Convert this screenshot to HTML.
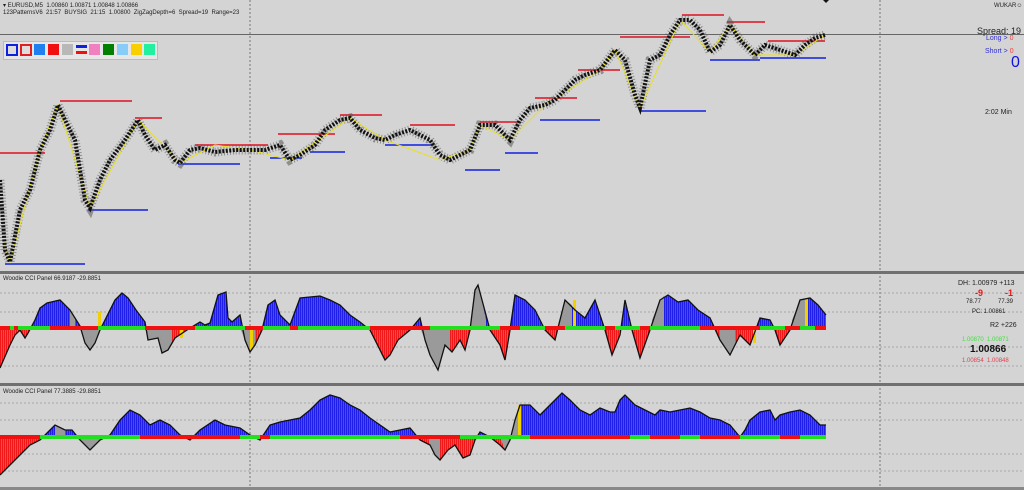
<!DOCTYPE html>
<html><head><meta charset="utf-8"><style>
html,body{margin:0;padding:0;background:#d4d4d4;}
body{width:1024px;height:490px;overflow:hidden;position:relative;font-family:"Liberation Sans",sans-serif;}
.t{position:absolute;font-size:6px;color:#222;white-space:nowrap;}
</style></head><body>
<svg width="1024" height="490" style="position:absolute;left:0;top:0">
<defs>
<clipPath id="a1"><rect x="0" y="272" width="880" height="56"/></clipPath>
<clipPath id="b1"><rect x="0" y="328" width="880" height="56"/></clipPath>
<clipPath id="a2"><rect x="0" y="384" width="880" height="53"/></clipPath>
<clipPath id="b2"><rect x="0" y="437" width="880" height="53"/></clipPath>
<pattern id="pb" width="2" height="10" patternUnits="userSpaceOnUse"><rect width="2" height="10" fill="#1e1ee8"/><rect x="1" width="0.6" height="10" fill="#6a6af0"/></pattern>
<pattern id="pr" width="2" height="10" patternUnits="userSpaceOnUse"><rect width="2" height="10" fill="#f01818"/><rect x="1" width="0.6" height="10" fill="#f07070"/></pattern>
</defs>
<line x1="250" y1="0" x2="250" y2="490" stroke="#777" stroke-dasharray="2,2"/>
<line x1="880" y1="0" x2="880" y2="490" stroke="#777" stroke-dasharray="2,2"/>
<line x1="0" y1="34.5" x2="1024" y2="34.5" stroke="#666" stroke-width="1"/>
<rect x="0" y="271" width="1024" height="3" fill="#707070"/>
<rect x="0" y="383" width="1024" height="3" fill="#707070"/>
<rect x="0" y="487" width="1024" height="3" fill="#888"/>
<g stroke="#999" stroke-dasharray="2,2" stroke-width="0.8">
<line x1="0" y1="293" x2="1024" y2="293"/><line x1="0" y1="312" x2="1024" y2="312"/>
<line x1="0" y1="347" x2="1024" y2="347"/><line x1="0" y1="366" x2="1024" y2="366"/>
<line x1="0" y1="403" x2="1024" y2="403"/><line x1="0" y1="420" x2="1024" y2="420"/>
<line x1="0" y1="454" x2="1024" y2="454"/><line x1="0" y1="471" x2="1024" y2="471"/>
</g>
<g stroke="#e01020" stroke-width="1.5">
<line x1="0" y1="153" x2="45" y2="153"/><line x1="60" y1="101" x2="132" y2="101"/>
<line x1="135" y1="118" x2="162" y2="118"/><line x1="195" y1="145" x2="268" y2="145"/>
<line x1="278" y1="134" x2="335" y2="134"/><line x1="340" y1="115" x2="382" y2="115"/>
<line x1="410" y1="125" x2="455" y2="125"/><line x1="480" y1="122" x2="520" y2="122"/>
<line x1="535" y1="98" x2="577" y2="98"/><line x1="578" y1="70" x2="620" y2="70"/>
<line x1="620" y1="37" x2="690" y2="37"/><line x1="682" y1="15" x2="724" y2="15"/>
<line x1="727" y1="22" x2="765" y2="22"/><line x1="768" y1="41" x2="825" y2="41"/>
</g>
<g stroke="#1020e0" stroke-width="1.5">
<line x1="5" y1="264" x2="85" y2="264"/><line x1="88" y1="210" x2="148" y2="210"/>
<line x1="178" y1="164" x2="240" y2="164"/><line x1="270" y1="158" x2="302" y2="158"/>
<line x1="310" y1="152" x2="345" y2="152"/><line x1="385" y1="145" x2="432" y2="145"/>
<line x1="465" y1="170" x2="500" y2="170"/><line x1="505" y1="153" x2="538" y2="153"/>
<line x1="540" y1="120" x2="600" y2="120"/><line x1="640" y1="111" x2="706" y2="111"/>
<line x1="710" y1="60" x2="760" y2="60"/><line x1="760" y1="58" x2="826" y2="58"/>
</g>
<g id="price">
<polyline fill="none" stroke="#555" stroke-opacity="0.55" stroke-width="9" stroke-dasharray="1,2" points="0,180 5,250 10,262 20,210 30,190 40,150 50,130 58,105 65,120 75,140 85,200 90,208 100,180 110,160 125,140 138,120 145,135 155,150 165,145 175,160 180,163 190,150 200,148 215,152 235,150 250,150 265,150 280,145 290,160 300,155 315,145 325,130 340,120 350,118 360,130 375,138 385,140 395,135 410,130 420,135 430,140 440,155 450,160 460,155 470,150 480,125 495,125 510,140 520,120 530,108 545,105 555,100 565,90 575,80 585,75 600,70 615,50 625,60 635,95 640,108 650,60 660,55 670,35 680,20 690,20 700,30 710,52 720,45 730,25 740,40 755,55 765,45 780,50 795,55 805,45 815,38 825,35"/>
<polyline fill="none" stroke="#e8e020" stroke-width="1" points="3,240 10,262 40,150 58,105 90,208 138,120 180,163 215,145 250,150 290,160 350,118 385,140 440,160 470,150 480,125 510,140 545,105 600,70 615,50 640,108 680,20 710,52 730,25 755,55 795,55 825,35"/>
<polyline fill="none" stroke="#111" stroke-width="4" stroke-dasharray="2,1.5" points="0,180 5,250 10,262 20,210 30,190 40,150 50,130 58,105 65,120 75,140 85,200 90,208 100,180 110,160 125,140 138,120 145,135 155,150 165,145 175,160 180,163 190,150 200,148 215,152 235,150 250,150 265,150 280,145 290,160 300,155 315,145 325,130 340,120 350,118 360,130 375,138 385,140 395,135 410,130 420,135 430,140 440,155 450,160 460,155 470,150 480,125 495,125 510,140 520,120 530,108 545,105 555,100 565,90 575,80 585,75 600,70 615,50 625,60 635,95 640,108 650,60 660,55 670,35 680,20 690,20 700,30 710,52 720,45 730,25 740,40 755,55 765,45 780,50 795,55 805,45 815,38 825,35"/>
</g>
<polygon points="823,0 829,0 826,3" fill="#111"/>
<polygon clip-path="url(#a1)" fill="url(#pb)" points="0,328 0,368 10,345 15,335 20,330 25,338 28,333 35,320 40,308 47,303 60,300 70,310 80,326 85,343 90,350 95,343 100,330 110,310 115,300 122,293 128,298 136,310 145,322 148,340 158,338 162,353 168,350 175,338 190,328 195,325 200,322 205,325 210,323 218,295 226,292 228,318 232,322 240,315 245,340 250,352 255,345 262,330 268,305 275,300 280,315 290,325 300,298 310,297 320,296 330,300 340,305 345,310 350,315 360,322 370,330 375,340 380,350 385,360 390,355 398,340 410,330 420,318 425,340 430,355 438,370 445,345 452,352 460,340 465,350 470,330 475,290 478,285 482,300 490,330 500,345 505,360 510,330 515,295 525,300 535,310 545,330 555,340 565,300 575,310 585,318 595,300 605,330 612,355 620,335 625,300 632,330 640,358 650,330 660,300 668,295 678,302 688,300 698,310 710,318 720,340 730,355 740,335 750,345 760,318 770,320 775,330 780,345 790,330 800,300 810,298 818,305 826,315 826,328"/>
<polygon clip-path="url(#b1)" fill="url(#pr)" points="0,328 0,368 10,345 15,335 20,330 25,338 28,333 35,320 40,308 47,303 60,300 70,310 80,326 85,343 90,350 95,343 100,330 110,310 115,300 122,293 128,298 136,310 145,322 148,340 158,338 162,353 168,350 175,338 190,328 195,325 200,322 205,325 210,323 218,295 226,292 228,318 232,322 240,315 245,340 250,352 255,345 262,330 268,305 275,300 280,315 290,325 300,298 310,297 320,296 330,300 340,305 345,310 350,315 360,322 370,330 375,340 380,350 385,360 390,355 398,340 410,330 420,318 425,340 430,355 438,370 445,345 452,352 460,340 465,350 470,330 475,290 478,285 482,300 490,330 500,345 505,360 510,330 515,295 525,300 535,310 545,330 555,340 565,300 575,310 585,318 595,300 605,330 612,355 620,335 625,300 632,330 640,358 650,330 660,300 668,295 678,302 688,300 698,310 710,318 720,340 730,355 740,335 750,345 760,318 770,320 775,330 780,345 790,330 800,300 810,298 818,305 826,315 826,328"/>
<g fill="#9a9a9a">
<polygon points="70,310 75,318 75,328 70,328"/>
<polygon points="80,328 85,343 90,350 95,343 100,330 100,328"/>
<polygon points="145,328 148,340 158,338 162,353 168,350 172,342 172,328"/>
<polygon points="240,328 245,340 250,352 255,345 255,328"/>
<polygon points="420,328 425,340 430,355 438,370 445,345 450,350 450,328"/>
<polygon points="470,330 475,290 478,285 482,300 486,320 486,328 470,328"/>
<polygon points="557,328 565,300 572,305 572,328"/>
<polygon points="652,320 660,300 664,296 664,328 652,328"/>
<polygon points="720,328 720,340 730,355 735,345 735,328"/>
<polygon points="792,320 800,300 806,299 806,328 792,328"/>
</g>
<g fill="#f0d000"><rect x="98" y="312" width="3" height="16"/><rect x="250" y="328" width="3" height="22"/><rect x="573" y="300" width="3" height="28"/><rect x="805" y="298" width="3" height="30"/><rect x="753" y="328" width="3" height="15"/><rect x="180" y="328" width="3" height="10"/></g>
<polyline fill="none" stroke="#111" stroke-width="1.3" points="0,368 10,345 15,335 20,330 25,338 28,333 35,320 40,308 47,303 60,300 70,310 80,326 85,343 90,350 95,343 100,330 110,310 115,300 122,293 128,298 136,310 145,322 148,340 158,338 162,353 168,350 175,338 190,328 195,325 200,322 205,325 210,323 218,295 226,292 228,318 232,322 240,315 245,340 250,352 255,345 262,330 268,305 275,300 280,315 290,325 300,298 310,297 320,296 330,300 340,305 345,310 350,315 360,322 370,330 375,340 380,350 385,360 390,355 398,340 410,330 420,318 425,340 430,355 438,370 445,345 452,352 460,340 465,350 470,330 475,290 478,285 482,300 490,330 500,345 505,360 510,330 515,295 525,300 535,310 545,330 555,340 565,300 575,310 585,318 595,300 605,330 612,355 620,335 625,300 632,330 640,358 650,330 660,300 668,295 678,302 688,300 698,310 710,318 720,340 730,355 740,335 750,345 760,318 770,320 775,330 780,345 790,330 800,300 810,298 818,305 826,315"/>
<rect x="0" y="326" width="826" height="4" fill="#20e020"/>
<g fill="#f01010">
<rect x="0" y="326" width="10" height="4"/><rect x="14" y="326" width="4" height="4"/><rect x="50" y="326" width="48" height="4"/><rect x="145" y="326" width="50" height="4"/><rect x="245" y="326" width="18" height="4"/><rect x="290" y="326" width="8" height="4"/><rect x="370" y="326" width="60" height="4"/><rect x="500" y="326" width="20" height="4"/><rect x="545" y="326" width="20" height="4"/><rect x="605" y="326" width="10" height="4"/><rect x="640" y="326" width="10" height="4"/><rect x="700" y="326" width="60" height="4"/><rect x="785" y="326" width="15" height="4"/><rect x="815" y="326" width="11" height="4"/>
</g>
<polygon clip-path="url(#a2)" fill="url(#pb)" points="0,437 0,475 10,465 20,455 30,445 40,440 55,425 65,430 72,430 80,440 90,450 100,440 110,435 120,420 130,410 140,415 150,425 160,420 170,425 180,435 190,440 200,430 215,420 225,425 240,428 250,435 260,440 270,425 280,422 290,420 300,418 310,410 320,400 330,395 340,398 350,405 360,410 370,418 380,425 390,432 400,430 410,428 420,440 430,445 435,455 440,460 448,450 455,445 463,458 470,455 475,440 480,432 490,437 500,445 505,450 510,440 515,420 520,405 530,405 540,415 545,410 550,405 555,400 562,393 570,400 580,410 590,415 600,408 610,412 615,412 620,400 625,395 635,405 645,410 655,415 660,410 670,412 680,410 690,408 700,412 710,418 720,420 730,425 740,437 745,430 750,420 760,412 770,410 775,420 780,415 790,412 800,410 810,415 820,425 826,425 826,437"/>
<polygon clip-path="url(#b2)" fill="url(#pr)" points="0,437 0,475 10,465 20,455 30,445 40,440 55,425 65,430 72,430 80,440 90,450 100,440 110,435 120,420 130,410 140,415 150,425 160,420 170,425 180,435 190,440 200,430 215,420 225,425 240,428 250,435 260,440 270,425 280,422 290,420 300,418 310,410 320,400 330,395 340,398 350,405 360,410 370,418 380,425 390,432 400,430 410,428 420,440 430,445 435,455 440,460 448,450 455,445 463,458 470,455 475,440 480,432 490,437 500,445 505,450 510,440 515,420 520,405 530,405 540,415 545,410 550,405 555,400 562,393 570,400 580,410 590,415 600,408 610,412 615,412 620,400 625,395 635,405 645,410 655,415 660,410 670,412 680,410 690,408 700,412 710,418 720,420 730,425 740,437 745,430 750,420 760,412 770,410 775,420 780,415 790,412 800,410 810,415 820,425 826,425 826,437"/>
<g fill="#9a9a9a">
<polygon points="55,437 55,425 65,430 65,437"/><polygon points="80,437 80,440 90,450 100,440 100,437"/>
<polygon points="428,437 430,445 435,455 440,460 440,437"/><polygon points="500,437 505,450 510,440 515,420 518,410 518,437"/>
</g>
<rect x="518" y="405" width="3" height="32" fill="#f0d000"/>
<polyline fill="none" stroke="#111" stroke-width="1.3" points="0,475 10,465 20,455 30,445 40,440 55,425 65,430 72,430 80,440 90,450 100,440 110,435 120,420 130,410 140,415 150,425 160,420 170,425 180,435 190,440 200,430 215,420 225,425 240,428 250,435 260,440 270,425 280,422 290,420 300,418 310,410 320,400 330,395 340,398 350,405 360,410 370,418 380,425 390,432 400,430 410,428 420,440 430,445 435,455 440,460 448,450 455,445 463,458 470,455 475,440 480,432 490,437 500,445 505,450 510,440 515,420 520,405 530,405 540,415 545,410 550,405 555,400 562,393 570,400 580,410 590,415 600,408 610,412 615,412 620,400 625,395 635,405 645,410 655,415 660,410 670,412 680,410 690,408 700,412 710,418 720,420 730,425 740,437 745,430 750,420 760,412 770,410 775,420 780,415 790,412 800,410 810,415 820,425 826,425"/>
<rect x="0" y="435" width="826" height="4" fill="#20e020"/>
<g fill="#f01010">
<rect x="0" y="435" width="40" height="4"/><rect x="140" y="435" width="100" height="4"/><rect x="260" y="435" width="10" height="4"/><rect x="400" y="435" width="60" height="4"/><rect x="530" y="435" width="100" height="4"/><rect x="650" y="435" width="30" height="4"/><rect x="700" y="435" width="40" height="4"/><rect x="780" y="435" width="20" height="4"/>
</g>
</svg>
<div class="t" style="left:3px;top:2px">▾ EURUSD,M5 &nbsp;1.00860 1.00871 1.00848 1.00866</div>
<div class="t" style="left:3px;top:10px">123PatternsV6 &nbsp;21:57 &nbsp;BUYSIG &nbsp;21:15 &nbsp;1.00800 &nbsp;ZigZagDepth=6 &nbsp;Spread=19 &nbsp;Range=23</div>
<div style="position:absolute;left:3px;top:41px;width:153px;height:17px;background:#e6e6e6;border:1px solid #bbb"></div>
<div style="position:absolute;left:6px;top:44px;width:8px;height:8px;border:2px solid #1020e0;background:#ddd"></div>
<div style="position:absolute;left:20px;top:44px;width:8px;height:8px;border:2px solid #e02020;background:#ddd"></div>
<div style="position:absolute;left:34px;top:44px;width:11px;height:11px;background:#2080f0"></div>
<div style="position:absolute;left:48px;top:44px;width:11px;height:11px;background:#f01010"></div>
<div style="position:absolute;left:62px;top:44px;width:11px;height:11px;background:#b8b8b8"></div>
<div style="position:absolute;left:76px;top:45px;width:11px;height:3px;background:#1020e0"></div>
<div style="position:absolute;left:76px;top:51px;width:11px;height:3px;background:#f01010"></div>
<div style="position:absolute;left:89px;top:44px;width:11px;height:11px;background:#f080c0"></div>
<div style="position:absolute;left:103px;top:44px;width:11px;height:11px;background:#008000"></div>
<div style="position:absolute;left:117px;top:44px;width:11px;height:11px;background:#88ccf8"></div>
<div style="position:absolute;left:131px;top:44px;width:11px;height:11px;background:#f8d000"></div>
<div style="position:absolute;left:144px;top:44px;width:11px;height:11px;background:#20f0a0"></div>
<div class="t" style="left:994px;top:3px;font-size:6px">WUKAR☺</div>
<div class="t" style="left:977px;top:26px;font-size:9px;color:#222">Spread: 19</div>
<div class="t" style="left:986px;top:35px;font-size:7px;color:#3030d0">Long &gt; <span style="color:#f04040">0</span></div>
<div class="t" style="left:985px;top:48px;font-size:7px;color:#3030d0">Short &gt; <span style="color:#f04040">0</span></div>
<div class="t" style="left:1011px;top:54px;font-size:16px;color:#1010e0">0</div>
<div class="t" style="left:985px;top:109px;font-size:7px">2:02 Min</div>
<div class="t" style="left:3px;top:276px">Woodie CCI Panel 66.9187 -29.8851</div>
<div class="t" style="left:3px;top:389px">Woodie CCI Panel 77.3885 -29.8851</div>
<div class="t" style="left:958px;top:280px;font-size:7px">DH: 1.00979 +113</div>
<div class="t" style="left:975px;top:288px;font-size:9px;color:#f01010;font-weight:bold">-9</div>
<div class="t" style="left:1005px;top:288px;font-size:9px;color:#f01010;font-weight:bold">-1</div>
<div class="t" style="left:966px;top:299px">78.77</div>
<div class="t" style="left:998px;top:299px">77.39</div>
<div class="t" style="left:972px;top:309px">PC: 1.00861</div>
<div class="t" style="left:990px;top:322px;font-size:7px">R2 +226</div>
<div class="t" style="left:962px;top:337px;color:#40e040">1.00870 &nbsp;1.00871</div>
<div class="t" style="left:970px;top:344px;font-size:10px;font-weight:bold;color:#111">1.00866</div>
<div class="t" style="left:962px;top:358px;color:#e04050">1.00854 &nbsp;1.00848</div>
</body></html>
